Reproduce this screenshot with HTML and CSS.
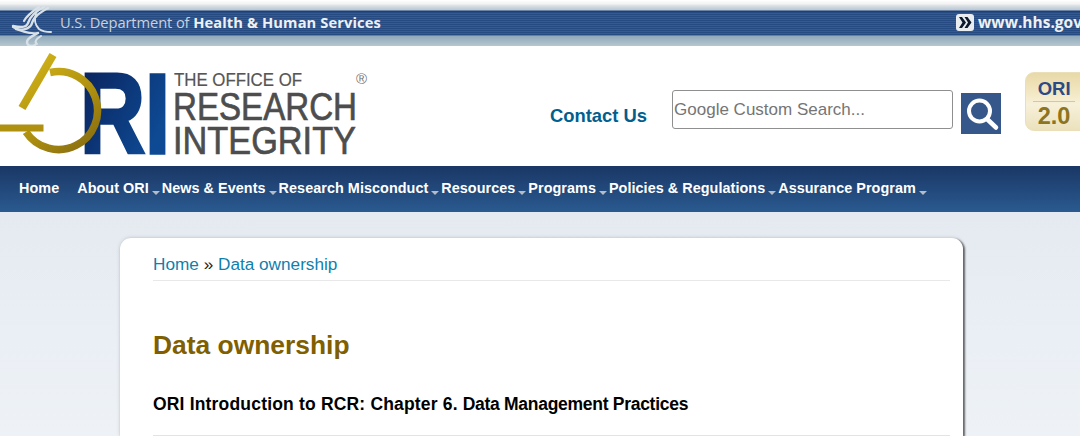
FILE: index.html
```html
<!DOCTYPE html>
<html lang="en">
<head>
<meta charset="utf-8">
<title>Data ownership</title>
<link rel="stylesheet" href="styles.css">
</head>
<body>
<div class="hhs">
  <svg class="eagle" viewBox="0 0 56 50" width="56" height="50" aria-hidden="true">
    <g fill="none" stroke="#d9e1e8" stroke-linecap="round">
      <path d="M48 8 C41 12 34 16 32 23 C31 28 24 31 16 29" stroke-width="2.400"/>
      <path d="M44 7 C36 11 30 17 28 23 C27 27 22 28 13 26" stroke-width="2.400"/>
      <path d="M39 7 C33 11 27 15 24 21" stroke-width="2.200"/>
      <path d="M36 14 C34 19 35 25 39 29 C42 31 46 32 51 32" stroke-width="2"/>
      <path d="M13 27 C22 32 30 34 38 33" stroke-width="2.200"/>
      <path d="M38 33 C33 36 27 38 27 42 C27 46 31 47 35 45" stroke-width="2.400"/>
      <path d="M41 36 C36 39 34 42 37 44" stroke-width="2"/>
    </g>
  </svg>
  <div class="hhs-title">U.S. Department of <b>Health &amp; Human Services</b></div>
  <div class="hhs-link">
    <svg viewBox="0 0 18 17" width="18" height="17" aria-hidden="true">
      <rect width="18" height="17" rx="3" fill="#e9edf0"/>
      <path d="M3 3 L6 3 L10 8.500 L6 14 L3 14 L6.500 8.500 Z M8.500 3 L11.500 3 L15.500 8.500 L11.500 14 L8.500 14 L12 8.500 Z" fill="#0d1a2b"/>
    </svg>
    <b>www.hhs.gov</b>
  </div>
</div>
<header class="masthead">
  <svg class="logo" viewBox="0 46 372 120" width="372" height="120" role="img" aria-label="ORI The Office of Research Integrity">
    <defs>
      <linearGradient id="ri" gradientUnits="userSpaceOnUse" x1="84" y1="80" x2="166" y2="120">
        <stop offset="0" stop-color="#0a2660"/>
        <stop offset="1" stop-color="#0e4a94"/>
      </linearGradient>
      <linearGradient id="gold" gradientUnits="userSpaceOnUse" x1="20" y1="55" x2="100" y2="155">
        <stop offset="0" stop-color="#d6b81a"/>
        <stop offset="0.55" stop-color="#ae900f"/>
        <stop offset="1" stop-color="#7f6512"/>
      </linearGradient>
    </defs>
    <text class="logo-ri" x="80" y="153" textLength="90" lengthAdjust="spacingAndGlyphs" fill="url(#ri)" stroke="url(#ri)">RI</text>
    <path d="M50 72.500 A39 39 0 1 1 26 132" fill="none" stroke="url(#gold)" stroke-width="7.500"/>
    <path d="M53 55 L22 108" fill="none" stroke="url(#gold)" stroke-width="8"/>
    <path d="M0 128 L43.500 128" fill="none" stroke="#b0900f" stroke-width="7"/>
    <text class="logo-small" x="174" y="86" textLength="128" lengthAdjust="spacingAndGlyphs">THE OFFICE OF</text>
    <text class="logo-big" x="173" y="120" textLength="184" lengthAdjust="spacingAndGlyphs">RESEARCH</text>
    <text class="logo-big" x="173" y="154" textLength="183" lengthAdjust="spacingAndGlyphs">INTEGRITY</text>
    <text class="logo-reg" x="356" y="84">®</text>
  </svg>
  <a class="contact" href="#">Contact Us</a>
  <input class="search" type="text" placeholder="Google Custom Search...">
  <button class="search-btn" type="button" aria-label="Search">
    <svg viewBox="0 0 40 41" width="40" height="41" aria-hidden="true">
      <circle cx="18.500" cy="18" r="10.500" fill="none" stroke="#fff" stroke-width="4"/>
      <path d="M26 26 L35 34.500" stroke="#fff" stroke-width="4.500" stroke-linecap="round"/>
    </svg>
  </button>
  <div class="badge">
    <span class="badge-top">ORI</span>
    <span class="badge-bottom">2.0</span>
  </div>
</header>
<nav class="nav">
  <a class="nav-home" href="#">Home</a>
  <a class="nav-item" href="#">About ORI</a>
  <a class="nav-item" href="#">News &amp; Events</a>
  <a class="nav-item" href="#">Research Misconduct</a>
  <a class="nav-item" href="#">Resources</a>
  <a class="nav-item" href="#">Programs</a>
  <a class="nav-item" href="#">Policies &amp; Regulations</a>
  <a class="nav-item" href="#">Assurance Program</a>
</nav>
<main class="page">
  <article class="card">
    <div class="crumbs"><a href="#">Home</a> » <a href="#">Data ownership</a></div>
    <h1 class="title">Data ownership</h1>
    <h2 class="subtitle"><span class="subtitle-lead">ORI Introduction to RCR: Chapter 6.</span> <span class="subtitle-tail">Data Management Practices</span></h2>
    <hr class="rule">
  </article>
</main>
</body>
</html>
```
FILE: styles.css
```css
* { box-sizing: border-box; }
html, body { margin: 0; height: 436px; overflow: hidden; }
body {
  width: 1080px;
  font-family: "Liberation Sans", Arial, sans-serif;
  background: #fff;
}
.hhs {
  position: relative;
  height: 46px;
  display: flex;
  align-items: center;
  justify-content: space-between;
  padding: 0 0 2px 60px;
  background:
    linear-gradient(to bottom, #fff 0, #f1f1f1 4px, #d7dde2 6px, #b9c8d4 10px, #1f3f77 11px, #1f3f77 12px, transparent 12px, transparent 35px, #8fa9ba 36px, #b6c7cf 46px),
    repeating-linear-gradient(to bottom, #264a82 0, #264a82 1px, #335a94 1px, #335a94 2px);
  overflow: hidden;
}
.eagle { position: absolute; left: 0; top: 0; }
.hhs-title {
  font-family: "Open Sans", sans-serif;
  font-size: 14.700px;
  color: #c8d2df;
  letter-spacing: -0.1px;
  white-space: nowrap;
}
.hhs-title b { color: #eef1f4; font-weight: 700; letter-spacing: 0.1px; }
.hhs-link {
  display: flex;
  align-items: center;
  gap: 4px;
  font-family: "Open Sans", sans-serif;
  font-size: 15.500px;
  color: #eef1f4;
  white-space: nowrap;
  margin-right: -2px;
}
.masthead {
  height: 120px;
  display: flex;
  align-items: flex-start;
  background: #fff;
  position: relative;
  overflow: hidden;
}
.logo { flex: none; display: block; }
.contact {
  margin: 59px 0 0 178px;
  font-size: 18.400px;
  font-weight: 700;
  line-height: 21px;
  color: #005f8f;
  text-decoration: none;
  white-space: nowrap;
}
.search {
  width: 281px;
  height: 39px;
  margin: 44px 0 0 25px;
  padding: 0 1px;
  border: 1.500px solid #8f8f8f;
  border-radius: 3px;
  font-family: "Liberation Sans", Arial, sans-serif;
  font-size: 17px;
  flex: none;
  outline: 0;
  background: #fff;
}
.search::placeholder { color: #757575; opacity: 1; }
.search-btn {
  width: 40px;
  height: 41px;
  margin: 47px 0 0 8px;
  padding: 0;
  border: 0;
  background: #36578a;
  flex: none;
}
.search-btn svg { display: block; }
.badge {
  flex: none;
  width: 66px;
  height: 59px;
  margin: 26px 0 0 24px;
  border: 1px solid #eadfb8;
  border-radius: 9px;
  background: linear-gradient(to bottom, #e9d9a8 0, #f3e8c4 35%, #f7f1da 55%, #ebe1bd 100%);
  display: flex;
  flex-direction: column;
  align-items: flex-start;
  padding-left: 7px;
  font-weight: 700;
  text-align: center;
}
.badge-top {
  width: 42px;
  font-size: 18.500px;
  line-height: 21px;
  height: 26px;
  margin-top: 5px;
  color: #2c4a85;
  border-bottom: 1px solid #d9c98a;
}
.badge-bottom {
  width: 42px;
  font-size: 23.500px;
  line-height: 27px;
  margin-top: 1px;
  color: #8c7420;
}
.nav {
  height: 46px;
  display: flex;
  align-items: center;
  padding: 0 0 2px 19px;
  background: linear-gradient(to bottom, #1a3765 0, #2a5a90 100%);
  font-size: 14.400px;
  font-weight: 700;
  letter-spacing: .05px;
  white-space: nowrap;
}
.nav a { color: #fff; text-decoration: none; }
.nav-home { margin-right: 18px; }
.nav-item { display: flex; align-items: center; margin-right: 2px; }
.nav-item::after {
  content: "";
  width: 0;
  height: 0;
  margin: 9px 0 0 3px;
  border-left: 4.500px solid transparent;
  border-right: 4.500px solid transparent;
  border-top: 4px solid #b4bcc8;
}
.page {
  height: 224px;
  padding: 26px 0 0 120px;
  background: linear-gradient(to bottom, #e5eaf1 0, #e9eef5 45%, #eef2f6 100%);
}
.card {
  width: 843px;
  height: 198px;
  padding: 13px 13px 0 33px;
  background: #fff;
  border-radius: 11px 11px 0 0;
  box-shadow: 1.500px 1px 2px rgba(0, 0, 0, .55), 0 0 4px rgba(0, 0, 0, .14);
}
.crumbs {
  font-size: 17.200px;
  line-height: 26px;
  height: 30px;
  color: #222;
  border-bottom: 1px solid #e8e8e8;
}
.crumbs a { color: #0f7fae; text-decoration: none; }
.title {
  margin: 46px 0 0;
  font-size: 26.400px;
  line-height: 36px;
  font-weight: 700;
  color: #7f5f00;
}
.subtitle {
  margin: 29px 0 0;
  font-size: 17.500px;
  line-height: 24px;
  font-weight: 700;
  color: #000;
}
.subtitle-lead { letter-spacing: .18px; }
.subtitle-tail { letter-spacing: -.28px; }
.rule {
  margin: 19px 0 0;
  border: 0;
  border-top: 1px solid #e3e3e3;
}
.logo-ri { font: 700 113px "Liberation Sans", sans-serif; stroke-width: 3.500px; }
.logo-small { font: 400 18px "Liberation Sans", sans-serif; fill: #555; stroke: #555; stroke-width: .2px; }
.logo-big { font: 400 39px "Liberation Sans", sans-serif; fill: #4d4d4d; stroke: #4d4d4d; stroke-width: .7px; }
.logo-reg { font: 400 15px "Liberation Sans", sans-serif; fill: #777; }
```
